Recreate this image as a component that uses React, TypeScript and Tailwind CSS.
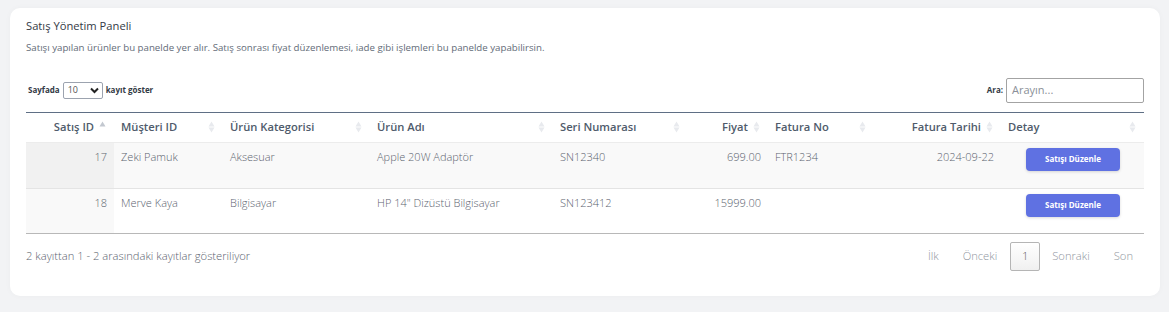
import React from 'react';

type Row = {
    id: number;
    customer: string;
    category: string;
    product: string;
    serial: string;
    price: string;
    invoiceNo: string;
    invoiceDate: string;
};

const rows: Row[] = [
    { id: 17, customer: 'Zeki Pamuk', category: 'Aksesuar', product: 'Apple 20W Adaptör', serial: 'SN12340', price: '699.00', invoiceNo: 'FTR1234', invoiceDate: '2024-09-22' },
    { id: 18, customer: 'Merve Kaya', category: 'Bilgisayar', product: 'HP 14" Dizüstü Bilgisayar', serial: 'SN123412', price: '15999.00', invoiceNo: '', invoiceDate: '' },
];

function SortIcon({ active = false }: { active?: boolean }) {
    return (
        <svg width="7" height="12" viewBox="0 0 7 12" className="absolute right-[8px] top-1/2 -translate-y-1/2">
            <path d="M3.5 0.5 L6.5 5.5 L0.5 5.5 Z" fill={active ? '#c3c8d0' : '#e8eaee'} />
            {!active && <path d="M3.5 11.5 L6.5 6.5 L0.5 6.5 Z" fill="#e8eaee" />}
        </svg>
    );
}

function Th({ children, right = false, active = false }: { children: React.ReactNode; right?: boolean; active?: boolean }) {
    return (
        <th className={`relative h-[30px] px-[7px] ${right ? 'text-right pr-[20px]' : 'text-left'} text-[11.2px] font-semibold text-[#4f5b6b] border-b border-[#ececec]`}>
            {children}
            <SortIcon active={active} />
        </th>
    );
}

export default function App() {
    return (
        <div className="min-h-[312px] bg-[#f2f3f5] pt-[8px] pl-[10px] pr-[9px] pb-[16px]" style={{ fontFamily: '"Open Sans", "Noto Sans", sans-serif' }}>
            <div className="bg-white rounded-[10px] shadow-[0_0_6px_rgba(0,0,0,0.03)] px-[16px] pt-[10px] pb-[25px]">
                <h1 className="text-[11.2px] leading-[16px] text-[#333a45]">Satış Yönetim Paneli</h1>
                <p className="mt-[7px] text-[9.7px] text-[#636b78]">
                    Satışı yapılan ürünler bu panelde yer alır. Satış sonrası fiyat düzenlemesi, iade gibi işlemleri bu panelde yapabilirsin.
                </p>

                <div className="mt-[22px] flex items-center justify-between">
                    <div className="flex items-center gap-[2px] pl-[2px] text-[8px] font-bold text-[#333a45]">
                        <span>Sayfada</span>
                        <div className="mx-[1px] flex h-[17px] w-[40px] items-center justify-between rounded-[2px] border border-[#9ca3af] pl-[4px] pr-[3px] text-[9px] font-normal text-[#555]">
                            <span>10</span>
                            <svg width="9" height="7" viewBox="0 0 9 7">
                                <path d="M1 1.5 L4.5 5 L8 1.5" stroke="#222" strokeWidth="2" fill="none" />
                            </svg>
                        </div>
                        <span>kayıt göster</span>
                    </div>
                    <div className="flex items-center gap-[3px] text-[8px] font-bold text-[#333a45]">
                        <span>Ara:</span>
                        <div className="flex h-[25px] w-[138px] items-center rounded-[2px] border border-[#a3a3a3] px-[5px] text-[11px] font-normal text-[#8a8f98]">
                            Arayın...
                        </div>
                    </div>
                </div>

                <table className="mt-[9px] w-full table-fixed border-collapse border-t border-[#5f6f85]">
                    <colgroup>
                        <col className="w-[88px]" />
                        <col className="w-[109px]" />
                        <col className="w-[147px]" />
                        <col className="w-[183px]" />
                        <col className="w-[135px]" />
                        <col className="w-[80px]" />
                        <col className="w-[106px]" />
                        <col className="w-[127px]" />
                        <col className="w-[143px]" />
                    </colgroup>
                    <thead>
                        <tr>
                            <Th right active>Satış ID</Th>
                            <Th>Müşteri ID</Th>
                            <Th>Ürün Kategorisi</Th>
                            <Th>Ürün Adı</Th>
                            <Th>Seri Numarası</Th>
                            <Th right>Fiyat</Th>
                            <Th>Fatura No</Th>
                            <Th right>Fatura Tarihi</Th>
                            <Th>Detay</Th>
                        </tr>
                    </thead>
                    <tbody className="text-[11px] font-light text-[#5c6470]">
                        {rows.map((r, i) => (
                            <tr key={r.id} className={`align-top ${i === 0 ? 'h-[46px] bg-[#f9f9f9] border-b border-[#e4e4e4]' : 'h-[45px] bg-white border-b border-[#b8b8b8]'}`}>
                                <td className={`px-[7px] pt-[6px] text-right ${i === 0 ? 'bg-[#f1f1f1]' : 'bg-[#f9f9f9]'}`}>{r.id}</td>
                                <td className="px-[7px] pt-[6px]">{r.customer}</td>
                                <td className="px-[7px] pt-[6px]">{r.category}</td>
                                <td className="px-[7px] pt-[6px]">{r.product}</td>
                                <td className="px-[7px] pt-[6px]">{r.serial}</td>
                                <td className="px-[7px] pt-[6px] text-right">{r.price}</td>
                                <td className="px-[7px] pt-[6px]">{r.invoiceNo}</td>
                                <td className="px-[7px] pt-[6px] text-right">{r.invoiceDate}</td>
                                <td className="px-[7px] pt-[5px]">
                                    <button className="ml-[18px] h-[23px] w-[94px] rounded-[4px] bg-[#5f71e2] text-[8px] font-bold text-white shadow-[0_1px_3px_rgba(0,0,0,0.15)]">
                                        Satışı Düzenle
                                    </button>
                                </td>
                            </tr>
                        ))}
                    </tbody>
                </table>

                <div className="mt-[8px] flex items-center justify-between text-[11.2px] font-light text-[#5c6470]">
                    <span>2 kayıttan 1 - 2 arasındaki kayıtlar gösteriliyor</span>
                    <div className="flex items-center text-[#8f959e]">
                        <span className="pl-[14px] pr-[12px]">İlk</span>
                        <span className="pl-[12px] pr-[13px]">Önceki</span>
                        <span className="flex h-[29px] w-[30px] items-center justify-center rounded-[2px] border border-[#b5b5b5] bg-gradient-to-b from-white to-[#f0f0f0] text-[#555]">1</span>
                        <span className="pl-[12px] pr-[12px]">Sonraki</span>
                        <span className="pl-[12px] pr-[11px]">Son</span>
                    </div>
                </div>
            </div>
        </div>
    );
}
